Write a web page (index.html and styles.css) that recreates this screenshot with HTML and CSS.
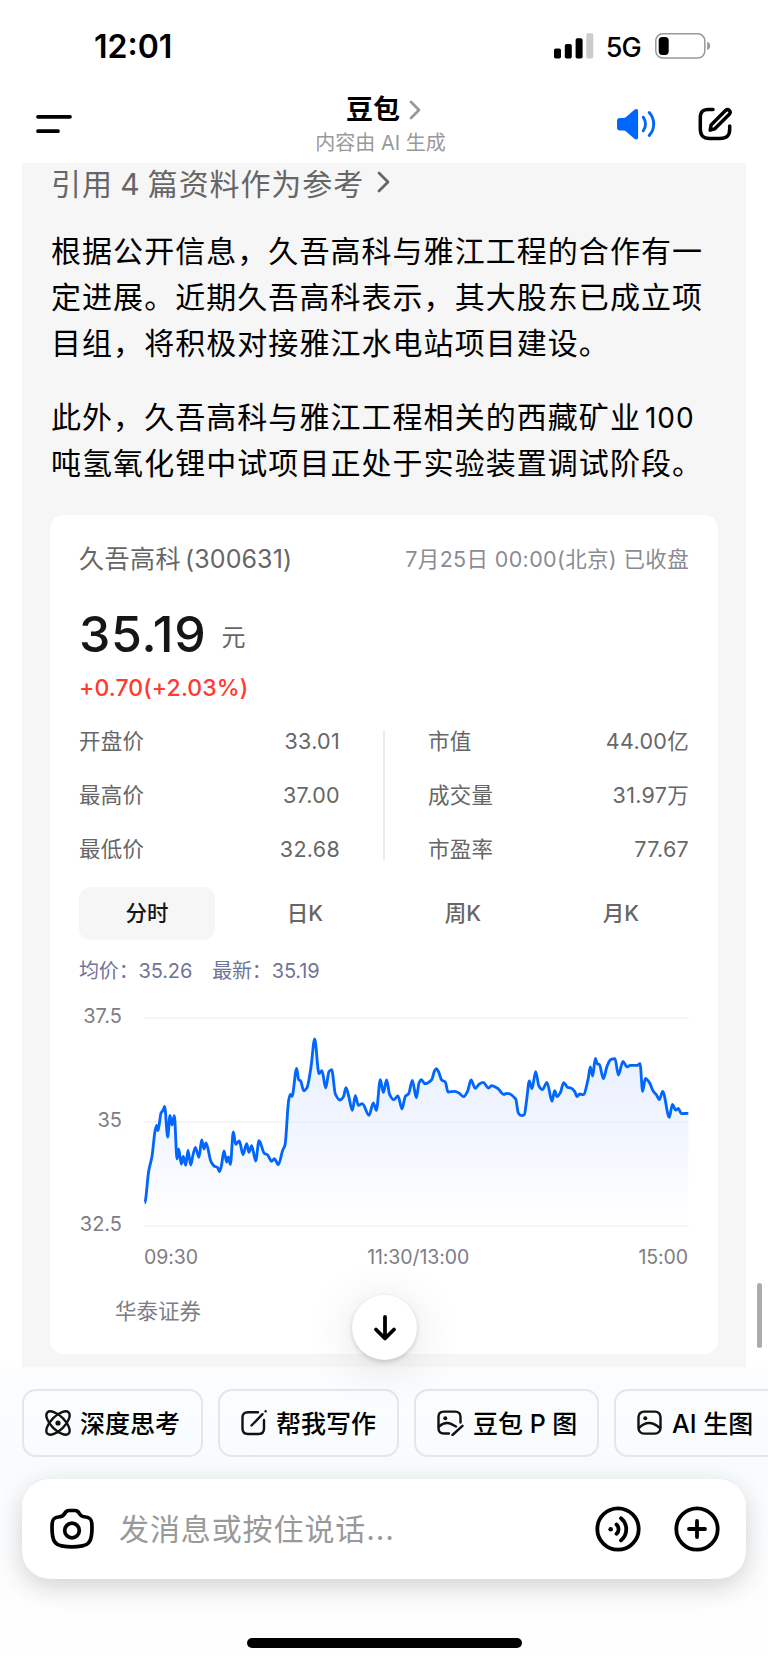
FILE: index.html
```
<!DOCTYPE html>
<html lang="zh-CN">
<head>
    <meta charset="UTF-8">
    <meta name="viewport" content="width=device-width, initial-scale=1.0">
    <title>豆包</title>
    <link rel="stylesheet" href="styles.css">
</head>
<body>
    <div class="app">
        <div class="status-bar">
            <span class="time">12:01</span>
            <div class="status-icons">
                <svg class="signal" width="40" height="26" viewBox="0 0 40 26">
                    <rect x="0" y="15.5" width="7" height="10" rx="1.8"/>
                    <rect x="10.8" y="11" width="7" height="14.5" rx="1.8"/>
                    <rect x="21.6" y="5.3" width="7" height="20.2" rx="1.8"/>
                    <rect x="32.3" y="0.3" width="7" height="25.2" rx="1.8" fill="#ccc"/>
                </svg>
                <span class="network">5G</span>
                <svg class="battery" width="56" height="26" viewBox="0 0 56 26">
                    <rect x="0.8" y="0.8" width="49" height="24.2" rx="7" fill="none" stroke="#999" stroke-width="1.5"/>
                    <rect x="3.7" y="3.9" width="10" height="18" rx="3.6"/>
                    <path d="M52.2 8.8c4 1.2 4 7 0 8.2z" fill="#999"/>
                </svg>
            </div>
        </div>

        <header class="header">
            <svg class="menu" width="36" height="20" viewBox="0 0 36 20" stroke="#000" stroke-width="3.7" stroke-linecap="round">
                <path d="M2 2.8h32M2 17.2h20"/>
            </svg>
            <div class="title">
                <h1>豆包
                    <svg width="12" height="20" viewBox="0 0 12 20" fill="none" stroke="#999" stroke-width="2.8" stroke-linecap="round" stroke-linejoin="round">
                        <path d="M2 2l8 8-8 8"/>
                    </svg>
                </h1>
                <p>内容由 AI 生成</p>
            </div>
            <div class="header-actions">
                <svg width="40" height="32" viewBox="0 0 40 32">
                    <path d="M4 10h3.5c1 0 1.8-.4 2.6-1l8-7c2.2-1.8 4-1 4 1v26.5c0 2-1.8 2.7-4 1l-8-7c-.8-.6-1.6-1-2.6-1H4c-2 0-3-1.2-3-3V13c0-1.800 1-3 3-3z" fill="#0066ff"/>
                    <path d="M27.2 9.2c3 4 3 9.600 0 13.600M33.2 4.500c6 6.500 6 16.500 0 23" fill="none" stroke="#0066ff" stroke-width="2.9" stroke-linecap="round"/>
                </svg>
                <svg width="36" height="36" viewBox="0 0 36 36" fill="none" stroke="#000" stroke-width="3.5" stroke-linecap="round" stroke-linejoin="round">
                    <path d="M16 3.500h-4.500C5.500 3.500 3.300 6 3.300 12v10.500c0 7 2.500 10 9.200 10h10.500c7 0 9.700-3 9.700-9.500v-3"/>
                    <path d="M13.200 24.200l.9-5.200L28.500 4.500c2.700-2.400 6.200 1 3.800 3.800L17.800 22.800z"/>
                </svg>
            </div>
        </header>

        <main class="chat">
            <div class="refs">引用 4 篇资料作为参考
                <svg width="15" height="22" viewBox="0 0 15 22" fill="none" stroke="#666" stroke-width="2.8" stroke-linecap="round" stroke-linejoin="round">
                    <path d="M3 2l9 9-9 9"/>
                </svg>
            </div>
            <p class="answer">根据公开信息，久吾高科与雅江工程的合作有一<br>定进展。近期久吾高科表示，其大股东已成立项<br>目组，将积极对接雅江水电站项目建设。</p>
            <p class="answer">此外，久吾高科与雅江工程相关的西藏矿业<span class="num">100</span><br>吨氢氧化锂中试项目正处于实验装置调试阶段。</p>

            <section class="card">
                <div class="card-head">
                    <h2>久吾高科<span>(300631)</span></h2>
                    <span class="date">7月25日 00:00(北京) 已收盘</span>
                </div>
                <div class="price"><strong>35.19</strong><span>元</span></div>
                <div class="change">+0.70(+2.03%)</div>

                <div class="stats">
                    <dl>
                        <div><dt>开盘价</dt><dd>33.01</dd></div>
                        <div><dt>最高价</dt><dd>37.00</dd></div>
                        <div><dt>最低价</dt><dd>32.68</dd></div>
                    </dl>
                    <dl>
                        <div><dt>市值</dt><dd>44.00亿</dd></div>
                        <div><dt>成交量</dt><dd>31.97万</dd></div>
                        <div><dt>市盈率</dt><dd>77.67</dd></div>
                    </dl>
                </div>

                <div class="tabs">
                    <span class="tab active">分时</span>
                    <span class="tab">日K</span>
                    <span class="tab">周K</span>
                    <span class="tab">月K</span>
                </div>

                <div class="legend"><span>均价：35.26</span><span>最新：35.19</span></div>

                <div class="chart">
                    <div class="y-axis"><span>37.5</span><span>35</span><span>32.5</span></div>
                    <svg width="546" height="218" viewBox="0 0 1638 654">
                        <defs>
                            <linearGradient id="area" x1="0" y1="0" x2="0" y2="1">
                                <stop offset="0" stop-color="#0057ff" stop-opacity="0.09"/>
                                <stop offset="0.5" stop-color="#0057ff" stop-opacity="0.055"/>
                                <stop offset="1" stop-color="#0057ff" stop-opacity="0"/>
                            </linearGradient>
                        </defs>
                        <path id="fill" fill="url(#area)"/>
                        <path d="M0 15H1635M0 327H1635M0 639H1635" stroke="#ebecf2" stroke-width="3"/>
                        <path id="line" fill="none" stroke="#0066ff" stroke-width="8.5" stroke-linejoin="round"/>
                    </svg>
                </div>
                <div class="x-axis"><span>09:30</span><span>11:30/13:00</span><span>15:00</span></div>
                <div class="source">华泰证券</div>
            </section>

            <div class="scrollbar"></div>
        </main>

        <footer class="footer">
            <button class="to-bottom">
                <svg width="26" height="28" viewBox="0 0 26 28" fill="none" stroke="#000" stroke-width="3.8" stroke-linecap="round" stroke-linejoin="round">
                    <path d="M13 3v21M4 15.500l9 9 9-9"/>
                </svg>
            </button>

            <div class="chips">
                <div class="chip chip-think">
                    <svg width="26" height="26" viewBox="0 0 26 26" fill="none" stroke="#111" stroke-width="2.4">
                        <ellipse cx="13" cy="13" rx="15" ry="6.800" transform="rotate(45 13 13)"/>
                        <ellipse cx="13" cy="13" rx="15" ry="6.800" transform="rotate(-45 13 13)"/>
                        <circle cx="13" cy="13" r="2.600" fill="#111" stroke="none"/>
                    </svg>
                    <span>深度思考</span>
                </div>
                <div class="chip chip-write">
                    <svg width="26" height="26" viewBox="0 0 26 26" fill="none" stroke="#111" stroke-width="2.4" stroke-linecap="round">
                        <path d="M17 2.200H7C3.200 2.200 1.500 4 1.500 7.500v11c0 3.800 1.700 5.500 5.500 5.500h10.500c3.800 0 5.500-1.700 5.500-5.500V10"/>
                        <path d="M10.500 15.500l11-11.300M24.600 1.300v.1"/>
                    </svg>
                    <span>帮我写作</span>
                </div>
                <div class="chip chip-edit">
                    <svg width="27" height="26" viewBox="0 0 27 26" fill="none" stroke="#111" stroke-width="2.4" stroke-linecap="round">
                        <path d="M12 23.500H7C3.200 23.500 1.500 21.800 1.500 18V7C1.500 3.200 3.200 1.600 7 1.600h11c3.800 0 5.500 1.600 5.500 5.400v5.500"/>
                        <path d="M2 16.500c3.500-3 8-4.500 12.500-2.300l4.500 2.300M15.500 25L25.500 15.800"/>
                        <circle cx="8.300" cy="8.300" r="2" fill="#111" stroke="none"/>
                    </svg>
                    <span>豆包 P 图</span>
                </div>
                <div class="chip chip-draw">
                    <svg width="26" height="26" viewBox="0 0 26 26" fill="none" stroke="#111" stroke-width="2.4" stroke-linecap="round">
                        <rect x="1.500" y="1.600" width="22" height="22" rx="5.500"/>
                        <path d="M2 18c6-6.500 13-7 21 0"/>
                        <circle cx="8.300" cy="8.300" r="2" fill="#111" stroke="none"/>
                    </svg>
                    <span>AI 生图</span>
                </div>
            </div>

            <div class="input-box">
                <svg width="44" height="42" viewBox="0 0 44 42" fill="none" stroke="#000" stroke-width="3.7" stroke-linejoin="round">
                    <path d="M8.500 9c3-.2 4.500-.6 5.800-3C15.700 3.300 16.500 2.500 19 2.500h6c2.500 0 3.300.8 4.700 3.500 1.300 2.400 2.800 2.800 5.800 3 4.500.5 6 2.200 6.300 6.500.3 4 .3 8-.4 12.500-.8 6-3.200 9-9 9.900-6.700 1.200-14.100 1.200-20.800 0-5.800-.9-8.200-3.900-9-9.900-.7-4.500-.7-8.500-.4-12.500C2.500 11.200 4 9.500 8.500 9z"/>
                    <circle cx="22" cy="22.500" r="7.300"/>
                </svg>
                <span class="placeholder">发消息或按住说话...</span>
                <svg class="voice" width="46" height="46" viewBox="0 0 46 46" fill="none" stroke="#000" stroke-width="3.8" stroke-linecap="round">
                    <circle cx="23" cy="23" r="20.700"/>
                    <circle cx="15.700" cy="23.300" r="2.300" fill="#000" stroke="none"/>
                    <path d="M21.500 18.500c2.800 2.500 2.800 6.800 0 9.300M26 12.200c7 5.800 7 16.400 0 22.200"/>
                </svg>
                <svg width="46" height="46" viewBox="0 0 46 46" fill="none" stroke="#000" stroke-width="3.8" stroke-linecap="round">
                    <circle cx="23" cy="23" r="20.700"/>
                    <path d="M15 23h16M23 15v16"/>
                </svg>
            </div>
            <div class="home-bar"></div>
        </footer>
    </div>

    <script>
        // 分时走势坐标 [x, y]
        const points = [
            [2,570],[14,475],[24,430],[33,355],[38,337],[42,353],[51,300],[57,292],[62,280],[71,372],[78,307],[84,336],[91,308],
            [99,438],[104,408],[112,453],[118,430],[125,457],[132,412],[140,456],[147,426],[154,403],[165,433],[173,381],[180,408],
            [186,390],[201,446],[210,459],[221,464],[226,476],[232,459],[240,414],[248,447],[253,432],[259,454],[268,357],[275,394],
            [286,384],[297,425],[308,392],[315,418],[323,398],[335,444],[345,383],[361,421],[370,425],[383,445],[391,437],[403,455],
            [416,412],[423,396],[434,262],[439,244],[444,250],[458,166],[464,200],[470,204],[479,233],[489,224],[501,162],[512,78],
            [525,182],[534,173],[545,225],[555,176],[563,170],[574,243],[588,261],[598,252],[606,224],[614,249],[625,292],[634,248],
            [643,277],[655,272],[675,307],[688,270],[697,292],[709,200],[718,238],[728,201],[737,245],[749,260],[762,249],[774,288],
            [784,250],[794,242],[805,202],[817,254],[825,210],[832,200],[843,212],[863,200],[871,175],[877,167],[884,177],[893,201],
            [904,207],[912,237],[933,235],[946,241],[959,251],[971,234],[981,201],[994,226],[1005,214],[1017,208],[1034,225],
            [1042,218],[1061,226],[1079,244],[1089,241],[1115,258],[1123,300],[1132,308],[1141,305],[1148,260],[1156,204],[1164,227],
            [1175,176],[1185,220],[1195,230],[1209,208],[1224,265],[1232,233],[1239,251],[1249,239],[1259,209],[1271,223],[1281,225],
            [1292,235],[1299,251],[1307,243],[1318,245],[1332,200],[1339,162],[1346,189],[1354,136],[1360,153],[1366,154],[1378,197],
            [1389,160],[1400,140],[1413,137],[1423,186],[1437,145],[1449,162],[1459,157],[1480,157],[1488,152],[1496,235],[1504,196],
            [1516,208],[1528,235],[1537,245],[1546,260],[1556,235],[1576,313],[1585,274],[1595,291],[1603,286],[1612,302],[1633,301]
        ];

        // 单调三次插值，极值点处切线水平
        const slope = points.map((p, i) => {
            if (i === 0 || i === points.length - 1) return 0;
            const a = (p[1] - points[i - 1][1]) / (p[0] - points[i - 1][0]);
            const b = (points[i + 1][1] - p[1]) / (points[i + 1][0] - p[0]);
            return a * b <= 0 ? 0 : 2 * a * b / (a + b);
        });
        let d = `M${points[0]}`;
        for (let i = 1; i < points.length; i++) {
            const [x0, y0] = points[i - 1];
            const [x1, y1] = points[i];
            const h = (x1 - x0) / 3;
            d += `C${x0 + h},${y0 + slope[i - 1] * h} ${x1 - h},${y1 - slope[i] * h} ${x1},${y1}`;
        }
        document.getElementById('line').setAttribute('d', d);
        document.getElementById('fill').setAttribute('d', `${d}V639H2Z`);
    </script>
</body>
</html>
```
FILE: styles.css
```
* {
    box-sizing: border-box;
    margin: 0;
    padding: 0;
}
body {
    font-family: Inter, "Noto Sans CJK SC", sans-serif;
    background: #fff;
    color: #000;
}
svg {
    display: block;
    flex: none;
}
.app {
    width: 768px;
    height: 1662px;
    overflow: hidden;
    display: flex;
    flex-direction: column;
}

/* 状态栏 */
.status-bar {
    height: 92px;
    padding: 0 57px 0 94px;
    display: flex;
    align-items: center;
    justify-content: space-between;
}
.time {
    font-size: 32px;
    font-weight: 600;
}
.status-icons {
    display: flex;
    align-items: center;
}
.network {
    margin: 2px 14px 0 12px;
    font-size: 27px;
    font-weight: 500;
    letter-spacing: -0.8px;
}

/* 顶部导航 */
.header {
    height: 71px;
    padding: 0 35px 0 36px;
    display: grid;
    grid-template-columns: 160px 1fr 160px;
}
.menu {
    margin-top: 22px;
}
.title {
    display: flex;
    flex-direction: column;
    align-items: center;
    padding-right: 8px;
}
.title h1 {
    display: flex;
    align-items: center;
    gap: 9px;
    height: 34px;
    padding: 2px 0 0 6px;
    font-size: 27px;
    font-weight: 700;
    line-height: 34px;
}
.title p {
    font-size: 20px;
    line-height: 34px;
    color: #999;
    white-space: nowrap;
}
.header-actions {
    display: flex;
    justify-content: flex-end;
    gap: 41px;
    padding-top: 14px;
}
.header-actions svg:first-child {
    margin-top: 2px;
}

/* 对话内容 */
.chat {
    position: relative;
    height: 1204px;
    margin: 0 22px;
    padding: 0 28px;
    background: #f6f6f6;
}
.refs {
    display: flex;
    align-items: center;
    gap: 12px;
    height: 37px;
    padding-left: 1px;
    margin-bottom: 28px;
    font-size: 30px;
    letter-spacing: 0.9px;
    word-spacing: -2px;
    color: #666;
}
.answer {
    margin-bottom: 28px;
    padding-left: 1px;
    font-size: 30px;
    line-height: 46px;
    letter-spacing: 1.05px;
    white-space: nowrap;
}
.num {
    margin-left: 4px;
    font-size: 28px;
    line-height: 1;
    letter-spacing: 1px;
}

/* 行情卡片 */
.card {
    height: 839px;
    margin-top: 29px;
    padding: 24px 30px 0 29px;
    background: #fff;
    border-radius: 14px;
    color: #666;
}
.card-head {
    display: flex;
    justify-content: space-between;
    line-height: 40px;
    white-space: nowrap;
}
.card-head h2 {
    font-size: 25px;
    font-weight: 400;
    letter-spacing: 0.5px;
}
.card-head h2 span {
    margin-left: 4px;
    letter-spacing: 0.1px;
}
.date {
    font-size: 21.5px;
    letter-spacing: 0.35px;
    margin-right: -1px;
    color: #8b8b93;
}
.price {
    display: flex;
    gap: 15px;
    height: 60px;
    margin-top: 25px;
    line-height: 60px;
}
.price strong {
    font-size: 50px;
    font-weight: 500;
    letter-spacing: 0.7px;
    color: #161616;
}
.price span {
    padding-top: 4px;
    font-size: 24px;
}
.change {
    margin-top: 9px;
    font-size: 23px;
    font-weight: 500;
    line-height: 30px;
    letter-spacing: 0.1px;
    color: #ff3b30;
}
.stats {
    display: grid;
    grid-template-columns: 306px 304px;
    margin-top: 27px;
    height: 130px;
}
.stats dl {
    display: flex;
    flex-direction: column;
    justify-content: space-between;
    font-size: 21.5px;
    letter-spacing: 0.3px;
}
.stats dl div {
    display: flex;
    justify-content: space-between;
    line-height: 22px;
}
.stats dl:first-child {
    padding-right: 43px;
    border-right: 2px solid #ececec;
}
.stats dl:last-child {
    padding-left: 43px;
}
.tabs {
    display: grid;
    grid-template-columns: repeat(4, 136px);
    gap: 22px;
    margin-top: 27px;
}
.tab {
    height: 53px;
    border-radius: 12px;
    font-size: 21.5px;
    font-weight: 500;
    line-height: 53px;
    text-align: center;
}
.tab.active {
    background: #f6f6f6;
    color: #161616;
}
.legend {
    display: flex;
    gap: 20px;
    margin-top: 16px;
    font-size: 20px;
    line-height: 30px;
    letter-spacing: -0.15px;
    color: #6f7596;
}
.chart {
    display: flex;
    justify-content: space-between;
    margin: 27px -2px 0 0;
}
.y-axis {
    display: flex;
    flex-direction: column;
    justify-content: space-between;
    width: 43px;
    height: 228px;
    margin-top: -7px;
    font-size: 20px;
    line-height: 20px;
    text-align: right;
    color: #7d7d85;
}
.x-axis {
    display: flex;
    justify-content: space-between;
    margin: 11px 0 0 65px;
    font-size: 19.5px;
    line-height: 24px;
    letter-spacing: -0.1px;
    color: #7d7d85;
}
.source {
    margin: 26px 0 0 36px;
    font-size: 21.5px;
    line-height: 32px;
    color: #7d7d85;
}
.scrollbar {
    position: absolute;
    right: -16px;
    top: 1120px;
    width: 5px;
    height: 65px;
    border-radius: 3px;
    background: #acacac;
}

/* 底部操作区 */
.footer {
    position: relative;
    height: 295px;
    padding: 22px 22px 0;
    background: linear-gradient(180deg, #fbfcfd, #f9fcfe 30%, #fdfdfd 75%, #fff);
}
.to-bottom {
    position: absolute;
    left: 352px;
    top: -72px;
    width: 65px;
    height: 65px;
    display: flex;
    align-items: center;
    justify-content: center;
    border: none;
    border-radius: 50%;
    background: #fff;
    box-shadow: 0 2px 5px rgba(0,0,0,0.16), 0 6px 50px rgba(0,0,0,0.12);
}
.chips {
    display: flex;
    gap: 15px;
    width: 746px;
    overflow: hidden;
}
.chip {
    display: flex;
    flex: none;
    align-items: center;
    gap: 9px;
    height: 68px;
    padding-left: 21px;
    border: 2px solid #e4e6e8;
    border-radius: 14px;
    font-size: 25px;
    font-weight: 500;
    white-space: nowrap;
}
.chip span {
    padding-bottom: 2px;
}
.chip-think, .chip-write {
    width: 181px;
}
.chip-edit, .chip-draw {
    width: 185px;
}
.input-box {
    display: flex;
    align-items: center;
    height: 100px;
    margin-top: 22px;
    padding: 0 26px 0 28px;
    border-radius: 28px;
    background: #fff;
    box-shadow: 0 8px 24px rgba(0,0,0,0.14), 0 4px 44px rgba(0,0,0,0.04);
}
.placeholder {
    flex: 1;
    margin-left: 25px;
    padding-bottom: 4px;
    font-size: 30px;
    letter-spacing: 0.9px;
    color: #999;
}
.voice {
    margin-right: 33px;
}
.home-bar {
    width: 275px;
    height: 10px;
    margin: 59px auto 0;
    border-radius: 5px;
    background: #000;
}
```
